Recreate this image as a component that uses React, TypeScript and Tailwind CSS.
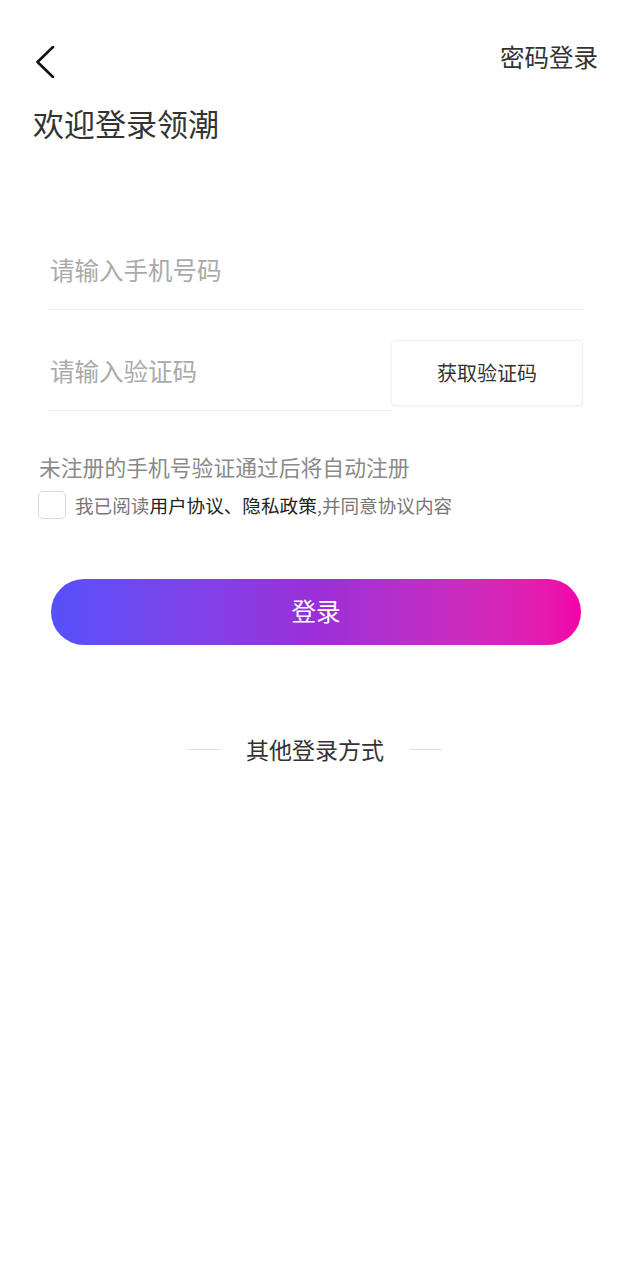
import { useState } from "react";

const font = { fontFamily: '"Noto Sans CJK SC", "Noto Sans", sans-serif' };

export default function App() {
  const [agreed, setAgreed] = useState(false);

  return (
    <div className="w-[630px] min-h-[1280px] bg-white text-[#333]" style={font}>
      {/* HEADER */}
      <div className="flex justify-between items-start pt-[41px] pl-[35px] pr-[32px]">
        <svg width="20" height="32" viewBox="0 0 20 32" className="mt-[5px]" fill="none">
          <path d="M18 1 L2.5 16 L18 31" stroke="#111" strokeWidth="2.6" strokeLinecap="round" strokeLinejoin="round" />
        </svg>
        <span className="text-[24.5px] leading-[32px] text-[#333]">密码登录</span>
      </div>

      {/* TITLE */}
      <h1 className="mt-[25px] pl-[33px] text-[31px] leading-[40px] text-[#333]">欢迎登录领潮</h1>

      {/* PHONE */}
      <div className="mt-[93px] ml-[48px] w-[536px] h-[74px] border-b border-[#ececec] flex items-center">
        <input
          className="w-full pl-[2px] pb-[4px] text-[24.5px] outline-none bg-transparent placeholder:text-[#aaaaaa]"
          placeholder="请输入手机号码"
        />
      </div>

      {/* CODE */}
      <div className="mt-[30px] ml-[48px] w-[535px] flex items-start">
        <div className="flex-1 h-[71px] border-b border-[#ececec] flex items-center pb-[8px]">
          <input
            className="w-full pl-[2px] text-[24.5px] outline-none bg-transparent placeholder:text-[#aaaaaa]"
            placeholder="请输入验证码"
          />
        </div>
        <button className="w-[192px] h-[66px] border border-[#efefef] rounded-[4px] shadow-[0_1px_2px_rgba(0,0,0,0.04)] text-[20px] text-[#333] flex items-center justify-center">
          获取验证码
        </button>
      </div>

      {/* TIPS */}
      <p className="mt-[42px] pl-[39px] text-[21.8px] leading-[28px] text-[#8a8a8a]">未注册的手机号验证通过后将自动注册</p>
      <div className="mt-[10px] pl-[38px] flex items-center">
        <button
          onClick={() => setAgreed(!agreed)}
          className="w-[28px] h-[28px] rounded-[5px] border border-[#d9d9d9] bg-white"
        />
        <span className="ml-[9px] text-[18.6px] leading-[26px] text-[#777]">
          我已阅读<span className="text-[#222]">用户协议、隐私政策</span>,并同意协议内容
        </span>
      </div>

      {/* LOGIN BUTTON */}
      <button className="mt-[60px] ml-[51px] w-[530px] h-[66px] rounded-full bg-gradient-to-r from-[#5550fb] via-[#9a2ed9] to-[#f200a8] text-white text-[24.5px] flex items-center justify-center pb-[2px]">
        登录
      </button>

      {/* OTHER */}
      <div className="mt-[89px] flex items-center justify-center gap-[26px]">
        <div className="w-[32px] h-px bg-[#dddddd]" />
        <span className="text-[23px] leading-[30px] text-[#333]">其他登录方式</span>
        <div className="w-[32px] h-px bg-[#dddddd]" />
      </div>
    </div>
  );
}
